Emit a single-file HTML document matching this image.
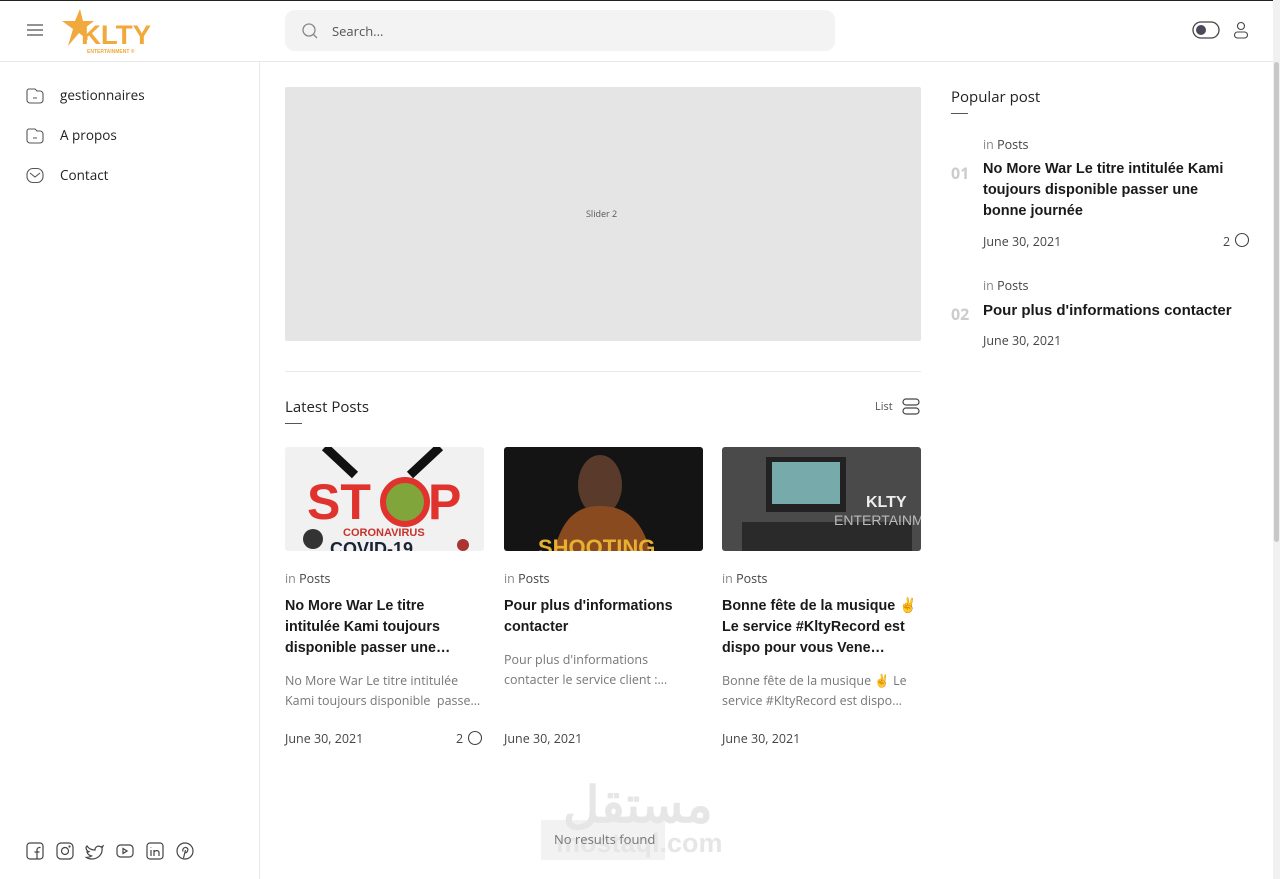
<!DOCTYPE html>
<html><head><meta charset="utf-8"><style>
*{box-sizing:border-box;margin:0;padding:0}
body{width:1280px;height:879px;overflow:hidden;background:#fff;font-family:"Open Sans","Liberation Sans",sans-serif;color:#222;position:relative}
.topline{position:absolute;top:0;left:0;width:1280px;height:1px;background:#222}
.hdr{position:absolute;top:0;left:0;width:1273px;height:62px;border-bottom:1px solid #e8e8e8}
.side{position:absolute;top:62px;left:0;width:260px;height:817px;border-right:1px solid #e8e8e8}
.nav{position:absolute;left:26px;font-size:13.5px;color:#222}
.nav span{position:absolute;left:34px;top:-1px;white-space:nowrap}
.sb{position:absolute;right:0;top:0;width:7px;height:879px;background:#f1f1f1}
.sb div{position:absolute;left:1px;top:62px;width:5px;height:480px;background:#c8c8c8;border-radius:3px}
.t{position:absolute;white-space:nowrap}
.card-title{position:absolute;width:190px;font-weight:bold;font-size:14.3px;line-height:21px;color:#1a1a1a;font-family:"Liberation Sans",sans-serif}
.ex{position:absolute;width:200px;font-size:12.5px;line-height:20px;color:#777}
.meta{font-size:12.5px;color:#444}
.gray{color:#888}
.img{position:absolute;top:447px;width:199px;height:104px;border-radius:3px;overflow:hidden}
</style></head><body>
<div class="hdr">
 <svg style="position:absolute;left:26px;top:23px" width="18" height="14"><g stroke="#777" stroke-width="1.6"><line x1="1" y1="2" x2="17" y2="2"/><line x1="1" y1="7" x2="17" y2="7"/><line x1="1" y1="12" x2="17" y2="12"/></g></svg>
 <svg style="position:absolute;left:58px;top:8px" width="96" height="48"><polygon points="22,1 25,13 36,13 27,20 30,32 21,25 10,38 15,21 4,13 17,13" fill="#f0a93a"/><text x="23" y="36" font-family="Liberation Sans" font-weight="bold" font-size="27" fill="#f0a93a" textLength="70" lengthAdjust="spacingAndGlyphs">KLTY</text><text x="29" y="45" font-family="Liberation Sans" font-weight="bold" font-size="5" fill="#f0a93a">ENTERTAINMENT ®</text></svg>
 <div style="position:absolute;left:285px;top:10px;width:550px;height:41px;background:#f3f3f3;border-radius:10px">
  <svg style="position:absolute;left:16px;top:12px" width="18" height="18"><circle cx="8" cy="8" r="6" stroke="#888" stroke-width="1.3" fill="none"/><line x1="12.5" y1="12.5" x2="16" y2="16" stroke="#888" stroke-width="1.3"/></svg>
  <span class="t" style="left:47px;top:12px;font-size:13px;color:#555">Search...</span>
 </div>
 <svg style="position:absolute;left:1192px;top:21px" width="28" height="18"><rect x="1" y="1" width="26" height="16" rx="8" fill="none" stroke="#444" stroke-width="1.3"/><circle cx="9" cy="9" r="5" fill="#4a4a5a"/></svg>
 <svg style="position:absolute;left:1233px;top:21px" width="16" height="18"><circle cx="8" cy="5" r="3.5" fill="none" stroke="#444" stroke-width="1.1"/><rect x="1.5" y="11" width="13" height="6" rx="3" fill="none" stroke="#444" stroke-width="1.1"/></svg>
</div>
<div class="topline"></div>
<div class="side">
 <div class="nav" style="top:25px"><svg width="18" height="17"><path d="M3 2h6l2 2h3a3 3 0 0 1 3 3v6a3 3 0 0 1-3 3H4a3 3 0 0 1-3-3V4a2 2 0 0 1 2-2z" fill="none" stroke="#555" stroke-width="1.1"/><line x1="7" y1="11" x2="11" y2="11" stroke="#555"/></svg><span>gestionnaires</span></div>
 <div class="nav" style="top:65px"><svg width="18" height="17"><path d="M3 2h6l2 2h3a3 3 0 0 1 3 3v6a3 3 0 0 1-3 3H4a3 3 0 0 1-3-3V4a2 2 0 0 1 2-2z" fill="none" stroke="#555" stroke-width="1.1"/><line x1="7" y1="11" x2="11" y2="11" stroke="#555"/></svg><span>A propos</span></div>
 <div class="nav" style="top:105px"><svg width="18" height="17"><rect x="1" y="1.5" width="16" height="14" rx="6" fill="none" stroke="#555" stroke-width="1.1"/><path d="M4 6l5 4 5-4" fill="none" stroke="#555" stroke-width="1.1"/></svg><span>Contact</span></div>
 <svg style="position:absolute;left:26px;top:780px" width="180" height="18" fill="none" stroke="#444" stroke-width="1.2">
  <rect x="1" y="1" width="16" height="16" rx="3"/><path d="M11 17v-7h2.5M11 17V8a2.5 2.5 0 0 1 2.5-2.5h1M8.5 10h5"/>
  <rect x="31" y="1" width="16" height="16" rx="4"/><circle cx="39" cy="9" r="3.5"/><circle cx="43.5" cy="4.5" r=".5"/>
  <path d="M61 4c2 3 5 4 8 4 0-3 3-5 6-3l2-1-1 2c1 6-4 11-10 11-2 0-4-.5-5.5-1.5 2 0 3.5-.5 5-1.5-2-.5-4-2-4.5-4 1 0 1.5 0 2-.3-2-.7-3-2.5-3-4.5z"/>
  <rect x="91" y="3" width="16" height="12" rx="3.5"/><path d="M97 6.5v5l4-2.5z"/>
  <rect x="121" y="1" width="16" height="16" rx="3"/><path d="M125 8v6M125 5v.5M128 14V8M128 10.5c0-2 5-3 5 0V14"/>
  <circle cx="159" cy="9" r="8"/><path d="M157.5 16l2-8M157 9.5c-1-3 2-5 4-3.5 2 1.5 0 5.5-2 4.5"/>
 </svg>
</div>
<div style="position:absolute;left:285px;top:87px;width:636px;height:254px;background:#e5e5e5;border-radius:2px"><span class="t" style="left:301px;top:120px;font-size:9px;color:#555">Slider 2</span></div>
<div style="position:absolute;left:285px;top:371px;width:636px;height:1px;background:#e8e8e8"></div>
<span class="t" style="left:285px;top:397px;font-size:15px;color:#222">Latest Posts</span>
<div style="position:absolute;left:285px;top:423px;width:17px;height:1px;background:#555"></div>
<span class="t" style="left:875px;top:399px;font-size:11px;color:#555">List</span>
<svg style="position:absolute;left:902px;top:398px" width="18" height="17" fill="none" stroke="#444" stroke-width="1.2"><rect x="1" y="1" width="16" height="6" rx="3"/><rect x="1" y="10" width="16" height="6" rx="3"/></svg>

<div class="img" style="left:285px;background:#f1f1f1">
 <svg width="199" height="104"><path d="M40 0l30 28M155 0l-30 28" stroke="#111" stroke-width="9"/><text x="22" y="72" font-family="Liberation Sans" font-weight="bold" font-size="50" fill="#e0332e">ST</text><circle cx="120" cy="55" r="22" fill="#7fa53b" stroke="#e0332e" stroke-width="6"/><text x="143" y="72" font-family="Liberation Sans" font-weight="bold" font-size="50" fill="#e0332e">P</text><text x="58" y="89" font-family="Liberation Sans" font-weight="bold" font-size="11" fill="#c8322b">CORONAVIRUS</text><text x="45" y="108" font-family="Liberation Sans" font-weight="bold" font-size="18" fill="#1b2436">COVID-19</text><circle cx="28" cy="92" r="10" fill="#333"/><circle cx="178" cy="98" r="6" fill="#a33"/></svg>
</div>
<div class="img" style="left:504px;background:#141414">
 <svg width="199" height="104"><ellipse cx="96" cy="38" rx="22" ry="30" fill="#5a3a2a"/><path d="M50 104c10-40 30-45 46-45s40 5 50 45z" fill="#8a4a20"/><text x="34" y="108" font-family="Liberation Sans" font-weight="bold" font-size="22" fill="#e8b030">SHOOTING</text></svg>
</div>
<div class="img" style="left:722px;background:#4a4a4a">
 <svg width="199" height="104"><rect x="44" y="10" width="80" height="55" fill="#222"/><rect x="50" y="15" width="68" height="42" fill="#7aa"/><rect x="20" y="75" width="170" height="29" fill="#2a2a2a"/><text x="144" y="60" font-family="Liberation Sans" font-weight="bold" font-size="16" fill="#eee">KLTY</text><text x="112" y="78" font-family="Liberation Sans" font-size="14" fill="#bbb">ENTERTAINME</text></svg>
</div>

<span class="t meta" style="left:285px;top:570px"><span class="gray">in</span> Posts</span>
<span class="t meta" style="left:504px;top:570px"><span class="gray">in</span> Posts</span>
<span class="t meta" style="left:722px;top:570px"><span class="gray">in</span> Posts</span>
<div class="card-title" style="left:285px;top:596px;width:178px">No More War Le titre intitulée Kami toujours disponible passer une…</div>
<div class="card-title" style="left:504px;top:596px">Pour plus d'informations contacter</div>
<div class="card-title" style="left:722px;top:596px;width:199px">Bonne fête de la musique ✌ Le service #KltyRecord est dispo pour vous Vene…</div>
<div class="ex" style="left:285px;top:671px">No More War Le titre intitulée Kami toujours disponible &nbsp;passe…</div>
<div class="ex" style="left:504px;top:650px">Pour plus d'informations contacter le service client :…</div>
<div class="ex" style="left:722px;top:671px">Bonne fête de la musique ✌ Le service #KltyRecord est dispo…</div>
<span class="t meta" style="left:285px;top:730px">June 30, 2021</span>
<span class="t meta" style="left:456px;top:730px">2</span>
<svg style="position:absolute;left:467px;top:730px" width="16" height="16"><circle cx="8" cy="8" r="6.5" fill="none" stroke="#444" stroke-width="1.1"/></svg>
<span class="t meta" style="left:504px;top:730px">June 30, 2021</span>
<span class="t meta" style="left:722px;top:730px">June 30, 2021</span>

<div style="position:absolute;left:541px;top:820px;width:124px;height:40px;background:#f2f2f2"></div>
<span class="t" style="left:563px;top:776px;font-size:50px;font-weight:bold;color:#e6e6e6;font-family:'Liberation Sans','Noto Sans CJK SC',sans-serif">مستقل</span>
<span class="t" style="left:556px;top:828px;font-size:27px;font-weight:bold;color:#e6e6e6;font-family:'Liberation Sans',sans-serif">mostaql.com</span>
<span class="t" style="left:554px;top:830px;font-size:13px;color:#777">No results found</span>

<span class="t" style="left:951px;top:87px;font-size:15px;color:#222">Popular post</span>
<div style="position:absolute;left:951px;top:113px;width:17px;height:1px;background:#555"></div>
<span class="t meta" style="left:983px;top:136px"><span class="gray">in</span> Posts</span>
<span class="t" style="left:951px;top:162px;font-size:16px;font-weight:bold;color:#ccc">01</span>
<div class="card-title" style="left:983px;top:159px;width:262px;font-size:14.5px">No More War Le titre intitulée Kami toujours disponible passer une bonne journée</div>
<span class="t meta" style="left:983px;top:233px">June 30, 2021</span>
<span class="t meta" style="left:1223px;top:233px">2</span>
<svg style="position:absolute;left:1234px;top:232px" width="16" height="16"><circle cx="8" cy="8" r="6.5" fill="none" stroke="#444" stroke-width="1.1"/></svg>
<span class="t meta" style="left:983px;top:277px"><span class="gray">in</span> Posts</span>
<span class="t" style="left:951px;top:303px;font-size:16px;font-weight:bold;color:#ccc">02</span>
<div class="card-title" style="left:983px;top:300px;width:280px;font-size:15px">Pour plus d'informations contacter</div>
<span class="t meta" style="left:983px;top:332px">June 30, 2021</span>
<div class="sb"><div></div></div>
</body></html>
